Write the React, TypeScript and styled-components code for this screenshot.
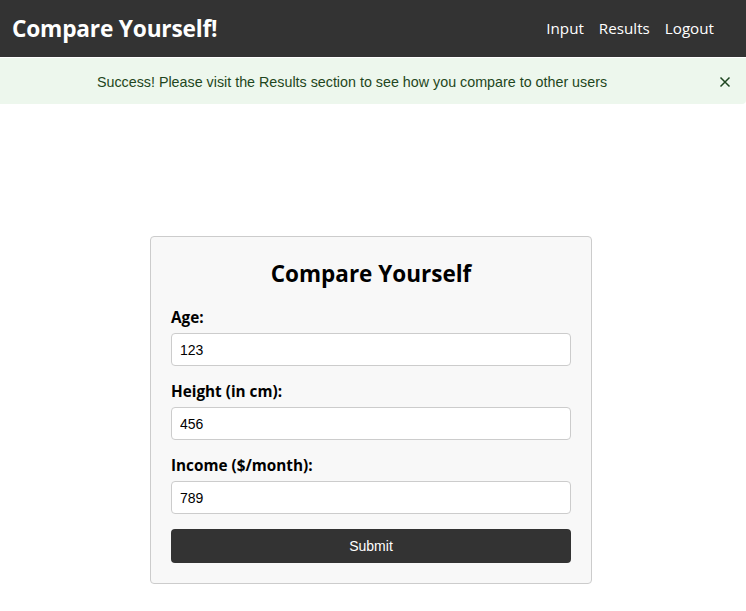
import React from "react";
import styled, { createGlobalStyle } from "styled-components";

const Global = createGlobalStyle`
  html, body { margin: 0; padding: 0; background: #ffffff; }
  body { font-family: "Open Sans", "Noto Sans", sans-serif; }
  * { box-sizing: border-box; }
`;

const Header = styled.header`
  height: 57px;
  background: #333333;
  display: flex;
  align-items: center;
  justify-content: space-between;
  padding: 0 32px 0 12px;
  color: #ffffff;
`;

const Brand = styled.h1`
  margin: 0;
  font-family: "Open Sans", sans-serif;
  font-size: 22.7px;
  font-weight: 700;
  letter-spacing: -0.2px;
  line-height: 1;
  padding-top: 2px;
`;

const Nav = styled.nav`
  display: flex;
  gap: 15px;
`;

const NavLink = styled.a`
  color: #ffffff;
  text-decoration: none;
  font-family: "Open Sans", sans-serif;
  font-size: 15.2px;
  line-height: 1;
`;

const Alert = styled.div`
  margin-top: 1px;
  height: 46px;
  background: rgb(237, 247, 237);
  color: rgb(30, 70, 32);
  display: flex;
  align-items: center;
  padding: 1px 10px 0 16px;
  border-radius: 0 0 4px 0;
`;

const AlertText = styled.div`
  flex: 1;
  text-align: center;
  font-family: "Liberation Sans", Arial, sans-serif;
  font-size: 14.3px;
  padding-right: 26px;
`;

const CloseButton = styled.button`
  width: 22px;
  height: 22px;
  border: 0;
  background: transparent;
  padding: 0;
  display: flex;
  align-items: center;
  justify-content: center;
  color: rgb(30, 70, 32);
  cursor: pointer;
`;

const Main = styled.main`
  display: flex;
  justify-content: center;
  padding: 132px 4px 0 0;
`;

const Card = styled.form`
  width: 442px;
  background: #f8f8f8;
  border: 1px solid #cccccc;
  border-radius: 4px;
  padding: 20px;
`;

const Title = styled.h2`
  margin: 2px 0 18px;
  text-align: center;
  font-family: "Open Sans", sans-serif;
  font-size: 22.5px;
  line-height: 30px;
  font-weight: 700;
  color: #000000;
`;

const Group = styled.div`
  margin-bottom: 15px;
`;

const Label = styled.label`
  display: block;
  font-family: "Open Sans", sans-serif;
  font-size: 15.3px;
  font-weight: 700;
  line-height: 21px;
  margin-bottom: 5px;
  color: #000000;
`;

const Input = styled.input`
  display: block;
  width: 100%;
  height: 33px;
  border: 1px solid #cccccc;
  border-radius: 4px;
  background: #ffffff;
  padding: 0 8px;
  font-family: "Liberation Sans", Arial, sans-serif;
  font-size: 14px;
  color: #000000;
`;

const SubmitButton = styled.button`
  display: block;
  width: 100%;
  height: 34px;
  border: 0;
  border-radius: 4px;
  background: #333333;
  color: #ffffff;
  font-family: "Liberation Sans", Arial, sans-serif;
  font-size: 14px;
  cursor: pointer;
`;

const fields = [
  { label: "Age:", value: "123" },
  { label: "Height (in cm):", value: "456" },
  { label: "Income ($/month):", value: "789" },
];

export default function App() {
  return (
    <>
      <Global />
      <Header>
        <Brand>Compare Yourself!</Brand>
        <Nav>
          <NavLink href="#">Input</NavLink>
          <NavLink href="#">Results</NavLink>
          <NavLink href="#">Logout</NavLink>
        </Nav>
      </Header>
      <Alert>
        <AlertText>Success! Please visit the Results section to see how you compare to other users</AlertText>
        <CloseButton type="button" aria-label="Close">
          <svg width="12" height="12" viewBox="0 0 12 12">
            <path d="M1.5 1.5 L10.5 10.5 M10.5 1.5 L1.5 10.5" stroke="currentColor" strokeWidth="1.5" fill="none" />
          </svg>
        </CloseButton>
      </Alert>
      <Main>
        <Card onSubmit={(e) => e.preventDefault()}>
          <Title>Compare Yourself</Title>
          {fields.map((f) => (
            <Group key={f.label}>
              <Label>{f.label}</Label>
              <Input defaultValue={f.value} />
            </Group>
          ))}
          <SubmitButton type="submit">Submit</SubmitButton>
        </Card>
      </Main>
    </>
  );
}
